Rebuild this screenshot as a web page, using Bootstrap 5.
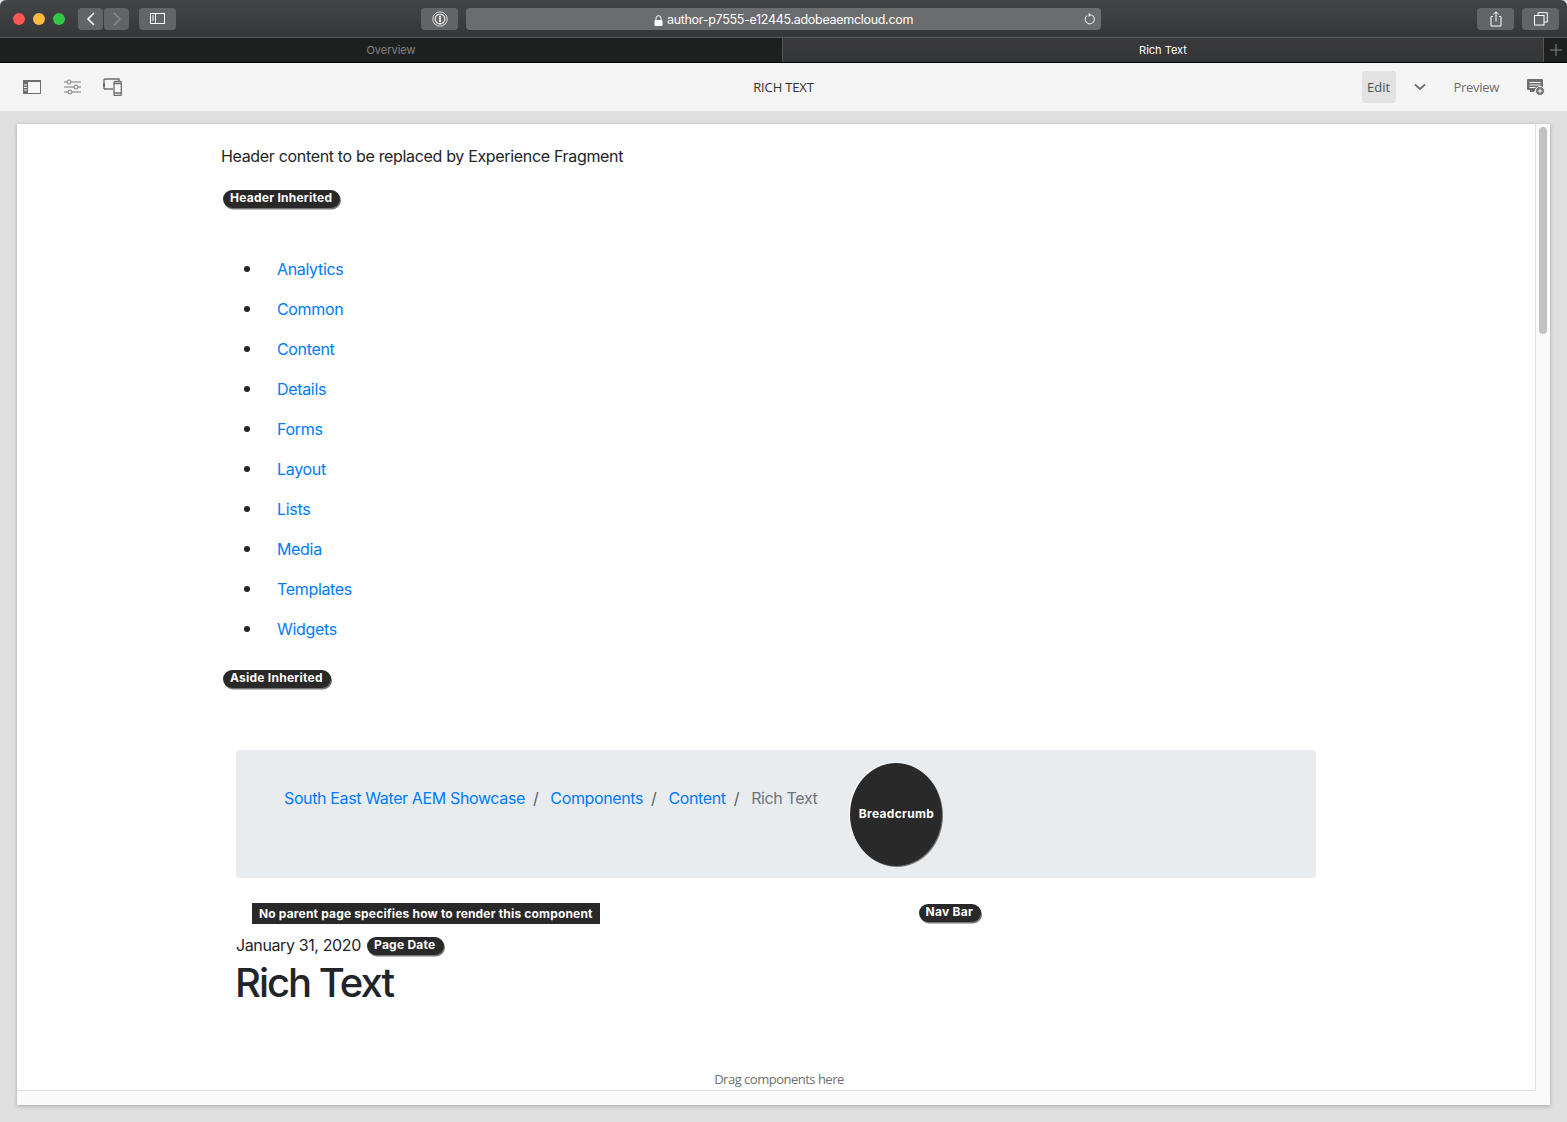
<!DOCTYPE html>
<html lang="en">
<head>
  <meta charset="UTF-8" />
  <meta name="viewport" content="width=device-width, initial-scale=1.0"/>
  <title>Rich Text</title>
  <link href="https://cdn.jsdelivr.net/npm/bootstrap@5.3.3/dist/css/bootstrap.min.css" rel="stylesheet" />
  <style>
    html, body { height: 1122px; overflow: hidden; }
    body { background: #e0e0e0; font-family: Inter, "Liberation Sans", sans-serif; color: #212529; }

    /* safari chrome */
    .title-bar { height: 38px; background: linear-gradient(#444547, #353638); border-bottom: 1px solid #5c5d5f; padding: 8px 0 0 13px; border-radius: 6px 6px 0 0; }
    .lights { gap: 8px; width: 65px; }
    .light { width: 12px; height: 12px; border-radius: 50%; margin-top: 5px; }
    .tool-btn { height: 22px; background: #636466; border-radius: 4px; color: #fff; }
    .url-box { width: 635px; height: 22px; background: #6b6c6e; border-radius: 4px; margin-left: 8px; color: #fff; font-size: 12.5px; letter-spacing: -.3px; padding-top: 2px; position: relative; }
    .url-reload { position: absolute; right: 4px; top: 4px; }
    .tab-bar { height: 25px; font-size: 11px; line-height: 24px; text-align: center; border-bottom: 1px solid #000; font-family: Inter, sans-serif; }
    .tab-off { width: 782px; background: #1e1f1f; color: #858585; }
    .tab-on { width: 761px; background: linear-gradient(#39393b, #343537); color: #fff; border-left: 1px solid #555; }
    .tab-add { flex: 1; background: #1e1f1f; border-left: 1px solid #555; line-height: 22px; }

    /* aem toolbar */
    .aem-bar { height: 48px; background: #f5f5f5; font-family: "Open Sans", sans-serif; font-size: 13px; position: relative; padding-left: 23px; }
    .aem-title { position: absolute; left: 0; right: 0; top: 15px; text-align: center; color: #323232; letter-spacing: -.15px; pointer-events: none; }
    .edit-btn { width: 34px; height: 32px; background: #e3e3e3; border-radius: 3px; line-height: 32px; text-align: center; color: #505050; }
    .preview-lbl { color: #6e6e6e; letter-spacing: -.3px; margin-top: 1px; }

    /* page frame */
    .frame-wrap { padding: 13px 17px 0; }
    .frame { width: 1533px; height: 981px; background: #fafafa; box-shadow: 0 1px 4px rgba(0,0,0,.28); position: relative; }
    .frame-inner { height: 967px; width: 1519px; background: #fff; border-right: 1px solid #e1e1e1; border-bottom: 1px solid #e1e1e1; padding: 20px 0 0 204px; overflow: hidden; letter-spacing: -.33px; }
    .scroll-thumb { position: absolute; left: 1522px; top: 3px; width: 8px; height: 207px; background: #c2c2c2; border-radius: 4px; }

    .head-text { font-size: 16px; line-height: 24px; margin-bottom: 22px; }
    .tag-pill { display: inline-block; background: #292929; color: #fff; font-size: 12px; font-weight: 700; line-height: 16px; letter-spacing: .25px; padding: 0 8px 2px 7px; border-radius: 10px; box-shadow: 1px 1.5px 0 #777; vertical-align: top; }
    .side-list { list-style: none; padding: 0; margin: 39px 0 21px 0; }
    .side-list li { height: 40px; line-height: 40px; font-size: 16px; display: flex; align-items: center; }
    .side-list li::before { content: ""; width: 6px; height: 6px; background: #212529; border-radius: 50%; margin: 0 27px 0 23px; }
    .side-list a, .crumb-list a { color: #007bff; text-decoration: none; }

    .main-col { margin: 60px 0 0 15px; width: 1080px; }
    .crumb-box { height: 128px; background: #e9ecef; border-radius: 4px; padding: 13px 0 0 48px; }
    .crumb-list { font-size: 16px; line-height: 24px; padding-top: 23px; letter-spacing: -.37px; --bs-breadcrumb-item-padding-x: 8px; --bs-breadcrumb-item-active-color: #6c757d; }
    .crumb-list .breadcrumb-item + .breadcrumb-item::before { padding-right: 12px; }
    .crumb-circle { width: 92px; height: 103px; margin-left: 33px; padding-bottom: 2px; background: #292929; color: #fff; font-size: 12px; font-weight: 700; letter-spacing: .3px; border-radius: 50%; box-shadow: 1px 1px 0 #777, -1px -1px 0 #fff; }
    .nav-row { margin-top: 25px; height: 21px; padding-left: 16px; }
    .no-parent { background: #292929; color: #fff; font-size: 12px; font-weight: 700; line-height: 21px; letter-spacing: .17px; padding: 0 7px; }
    .nav-pill { margin-left: 319px; margin-top: 1px; }
    .date-row { font-size: 16px; line-height: 24px; margin-top: 9px; letter-spacing: -.38px; }
    .date-row .tag-pill { margin-left: 2px; margin-top: 4px; }
    .rich-title { font-size: 40px; font-weight: 500; line-height: 48px; letter-spacing: -2px; margin: 2px 0 0 -1px; }
    .drag-hint { position: absolute; left: 0; width: 1524px; top: 946px; text-align: center; font-family: "Open Sans", sans-serif; font-size: 13px; line-height: 18px; color: #707070; letter-spacing: -.5px; }
  </style>
</head>
<body>
  <!-- SAFARI -->
  <div class="title-bar d-flex">
    <div class="lights d-flex">
      <span class="light" style="background:#fc5753"></span>
      <span class="light" style="background:#fdbc40"></span>
      <span class="light" style="background:#33c748"></span>
    </div>
    <div class="tool-btn d-flex align-items-center justify-content-center" style="width:25px">
      <svg width="10" height="14" viewBox="0 0 10 14"><path d="M8 1 2 7l6 6" fill="none" stroke="#fff" stroke-width="1.6"/></svg>
    </div>
    <div class="tool-btn d-flex align-items-center justify-content-center" style="width:25px;margin-left:1px">
      <svg width="10" height="14" viewBox="0 0 10 14"><path d="m2 1 6 6-6 6" fill="none" stroke="#8b8c8d" stroke-width="1.4"/></svg>
    </div>
    <div class="tool-btn d-flex align-items-center justify-content-center" style="width:37px;margin-left:10px">
      <svg width="16" height="12" viewBox="0 0 16 12"><rect x=".5" y=".5" width="14" height="10" fill="none" stroke="#fff"/><path d="M5.500 0v11M2 3h2M2 5h2M2 7h2" stroke="#fff" fill="none"/></svg>
    </div>
    <div class="tool-btn d-flex align-items-center justify-content-center" style="width:37px;margin-left:245px">
      <svg width="16" height="16" viewBox="0 0 16 16"><circle cx="8" cy="8" r="7.200" fill="none" stroke="#ddd"/><circle cx="8" cy="8" r="4.800" fill="none" stroke="#ddd" stroke-width="1.400"/><path d="M8 5v6" stroke="#eee" stroke-width="1.800"/></svg>
    </div>
    <div class="url-box d-flex align-items-center justify-content-center">
      <svg width="9" height="11" viewBox="0 0 9 11" style="margin-right:4px"><path d="M2 5V3.200a2.500 2.500 0 0 1 5 0V5" fill="none" stroke="#fff"/><rect x=".5" y="5" width="8" height="6" rx="1" fill="#fff"/></svg>
      <span>author-p7555-e12445.adobeaemcloud.com</span>
      <svg class="url-reload" width="14" height="14" viewBox="0 0 14 14"><path d="M8.500 3a4.600 4.600 0 1 1-4.500 .6" fill="none" stroke="#ddd" stroke-width="1.100"/><path d="M5.500 .8 8.600 3 5.500 5z" fill="#ddd"/></svg>
    </div>
    <div class="tool-btn d-flex align-items-center justify-content-center" style="width:37px;margin-left:376px">
      <svg width="14" height="16" viewBox="0 0 14 16"><path d="M4 5.500H2v9.500h10V5.500h-2M7 10.500V1M4.500 3.200 7 .8l2.500 2.400" fill="none" stroke="#fff"/></svg>
    </div>
    <div class="tool-btn d-flex align-items-center justify-content-center" style="width:37px;margin-left:8px">
      <svg width="14" height="14" viewBox="0 0 14 14"><rect x=".5" y="3.500" width="9.500" height="9.500" fill="none" stroke="#fff"/><path d="M4 3.500V.7h9.300V10H10" fill="none" stroke="#fff"/></svg>
    </div>
  </div>
  <div class="tab-bar d-flex">
    <div class="tab-off">Overview</div>
    <div class="tab-on">Rich Text</div>
    <div class="tab-add d-flex align-items-center justify-content-center">
      <svg width="12" height="12" viewBox="0 0 12 12"><path d="M6 0v12M0 6h12" stroke="#8a8a8a"/></svg>
    </div>
  </div>

  <!-- AEM TOOLBAR -->
  <div class="aem-bar d-flex align-items-center">
    <svg width="18" height="14" viewBox="0 0 18 14"><rect x=".5" y=".5" width="17" height="13" fill="none" stroke="#6e6e6e"/><rect width="5" height="14" fill="#6e6e6e"/><rect width="18" height="2" fill="#6e6e6e"/><path d="M1 5h3M1 7.500h3M1 10h3" stroke="#f5f5f5"/></svg>
    <svg width="17" height="16" viewBox="0 0 17 16" style="margin-left:23px"><path d="M0 3h17M0 8h17M0 13h17" stroke="#7a7a7a"/><circle cx="5" cy="3" r="2" fill="#f5f5f5" stroke="#7a7a7a"/><circle cx="12" cy="8" r="2" fill="#f5f5f5" stroke="#7a7a7a"/><circle cx="6" cy="13" r="2" fill="#f5f5f5" stroke="#7a7a7a"/></svg>
    <svg width="19" height="18" viewBox="0 0 19 18" style="margin-left:22px"><path d="M1 11V2a1 1 0 0 1 1-1h14v2M1 11h9" fill="none" stroke="#6e6e6e" stroke-width="1.400"/><rect y="5" width="2" height="4" fill="#6e6e6e"/><rect x="11" y="3.500" width="7.300" height="14" rx="1" fill="#f5f5f5" stroke="#6e6e6e" stroke-width="1.300"/><path d="M11 5.500h7M11 15h7" stroke="#6e6e6e" stroke-width="1.300"/></svg>
    <div class="aem-title">RICH TEXT</div>
    <div class="ms-auto d-flex align-items-center" style="margin-right:22px">
      <div class="edit-btn">Edit</div>
      <svg width="12" height="8" viewBox="0 0 12 8" style="margin-left:18px"><path d="m1 1.500 5 4.500 5-4.500" fill="none" stroke="#6e6e6e" stroke-width="1.700"/></svg>
      <span class="preview-lbl" style="margin-left:28px">Preview</span>
      <svg width="18" height="17" viewBox="0 0 18 17" style="margin-left:28px"><path d="M0 1a1 1 0 0 1 1-1h14a1 1 0 0 1 1 1v7h-6l-3 5H3v-2H1a1 1 0 0 1-1-1z" fill="#6e6e6e"/><path d="M2.500 3.500h11M2.500 6h11M2.500 8.500h6" stroke="#f5f5f5"/><circle cx="13" cy="12" r="4.500" fill="#6e6e6e" stroke="#f5f5f5"/><path d="M13 9.500v5M10.500 12h5" stroke="#fff"/></svg>
    </div>
  </div>

  <!-- PAGE -->
  <div class="frame-wrap">
    <div class="frame">
      <div class="frame-inner">
        <div class="head-text">Header content to be replaced by Experience Fragment</div>
        <div style="padding-left:2px;height:20px"><span class="tag-pill">Header Inherited</span></div>

        <ul class="side-list">
          <li><a href="#">Analytics</a></li>
          <li><a href="#">Common</a></li>
          <li><a href="#">Content</a></li>
          <li><a href="#">Details</a></li>
          <li><a href="#">Forms</a></li>
          <li><a href="#">Layout</a></li>
          <li><a href="#">Lists</a></li>
          <li><a href="#">Media</a></li>
          <li><a href="#">Templates</a></li>
          <li><a href="#">Widgets</a></li>
        </ul>
        <div style="padding-left:2px;height:20px"><span class="tag-pill">Aside Inherited</span></div>

        <div class="main-col">
          <div class="crumb-box d-flex">
            <ol class="breadcrumb crumb-list mb-0 align-self-start">
              <li class="breadcrumb-item"><a href="#">South East Water AEM Showcase</a></li>
              <li class="breadcrumb-item"><a href="#">Components</a></li>
              <li class="breadcrumb-item"><a href="#">Content</a></li>
              <li class="breadcrumb-item active">Rich Text</li>
            </ol>
            <div class="crumb-circle d-flex align-items-center justify-content-center">Breadcrumb</div>
          </div>
          <div class="nav-row d-flex align-items-start">
            <span class="no-parent">No parent page specifies how to render this component</span>
            <span class="tag-pill nav-pill">Nav Bar</span>
          </div>
          <div class="date-row">January 31, 2020 <span class="tag-pill">Page Date</span></div>
          <h1 class="rich-title">Rich Text</h1>
        </div>
      </div>
      <div class="drag-hint">Drag components here</div>
      <div class="scroll-thumb"></div>
    </div>
  </div>
</body>
</html>
